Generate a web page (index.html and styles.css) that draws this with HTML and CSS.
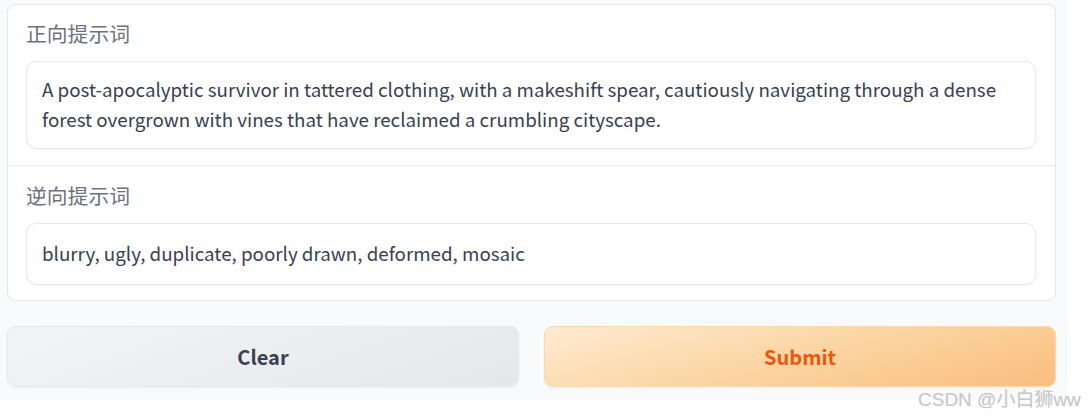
FILE: index.html
```html
<!DOCTYPE html>
<html><head><meta charset="utf-8"><link rel="stylesheet" href="styles.css"></head>
<body>
<div class="app">
  <div class="card">
    <div class="section">
      <div class="label">正向提示词</div>
      <div class="box multi">A post-apocalyptic survivor in tattered clothing, with a makeshift spear, cautiously navigating through a dense forest overgrown with vines that have reclaimed a crumbling cityscape.</div>
    </div>
    <div class="section second">
      <div class="label">逆向提示词</div>
      <div class="box single">blurry, ugly, duplicate, poorly drawn, deformed, mosaic</div>
    </div>
  </div>
  <div class="buttons">
    <button class="btn clear">Clear</button>
    <button class="btn submit">Submit</button>
  </div>
</div>
<div class="watermark">CSDN @小白狮ww</div>
</body></html>
```
FILE: styles.css
```css
html,body{margin:0;padding:0;background:#ffffff;}
body{font-family:"Noto Sans CJK SC","Noto Sans",sans-serif;position:relative;width:1089px;height:418px;overflow:hidden;}
.app{width:1068px;height:400px;background:#f9fafb;box-sizing:border-box;padding:4px 12px 0 7px;}
.card{background:#fff;border:1px solid #e5e7eb;border-radius:8px;box-sizing:border-box;width:1049px;}
.section{padding:16px 19px 16px 18px;}
.section.second{border-top:1px solid #e5e7eb;padding-top:17px;padding-bottom:15px;}
.label{font-size:20.8px;line-height:24px;color:#6b7280;margin-bottom:16px;}
.box{border:1px solid #e5e7eb;border-radius:10px;background:#fff;box-shadow:0 1px 2px rgba(0,0,0,0.03);color:#374151;font-size:18.75px;line-height:30px;padding:12px 15px 14px;}
.box.single{padding:14px 15px 16px;}
.section.second .label{margin-bottom:16px;}
.buttons{display:flex;gap:25px;margin-top:25px;}
.btn{flex:1;height:61px;border-radius:9px;font-family:"Noto Sans CJK SC","Noto Sans",sans-serif;font-weight:700;font-size:20px;cursor:pointer;box-shadow:0 1px 3px rgba(0,0,0,0.05);}
.clear{background:linear-gradient(160deg,#f3f4f6,#e5e7eb);border:1px solid #e5e7eb;color:#374151;}
.submit{background:linear-gradient(165deg,#feebd2 0%,#fbd5a2 50%,#f9be7e 100%);border:1px solid #fed7aa;color:#ea580c;}
.watermark{position:absolute;left:918px;top:388px;font-family:"Liberation Sans","Noto Sans CJK SC",sans-serif;font-size:19px;line-height:24px;color:#c8c8c8;text-shadow:0 0 1px #e8e8e8;}
```
